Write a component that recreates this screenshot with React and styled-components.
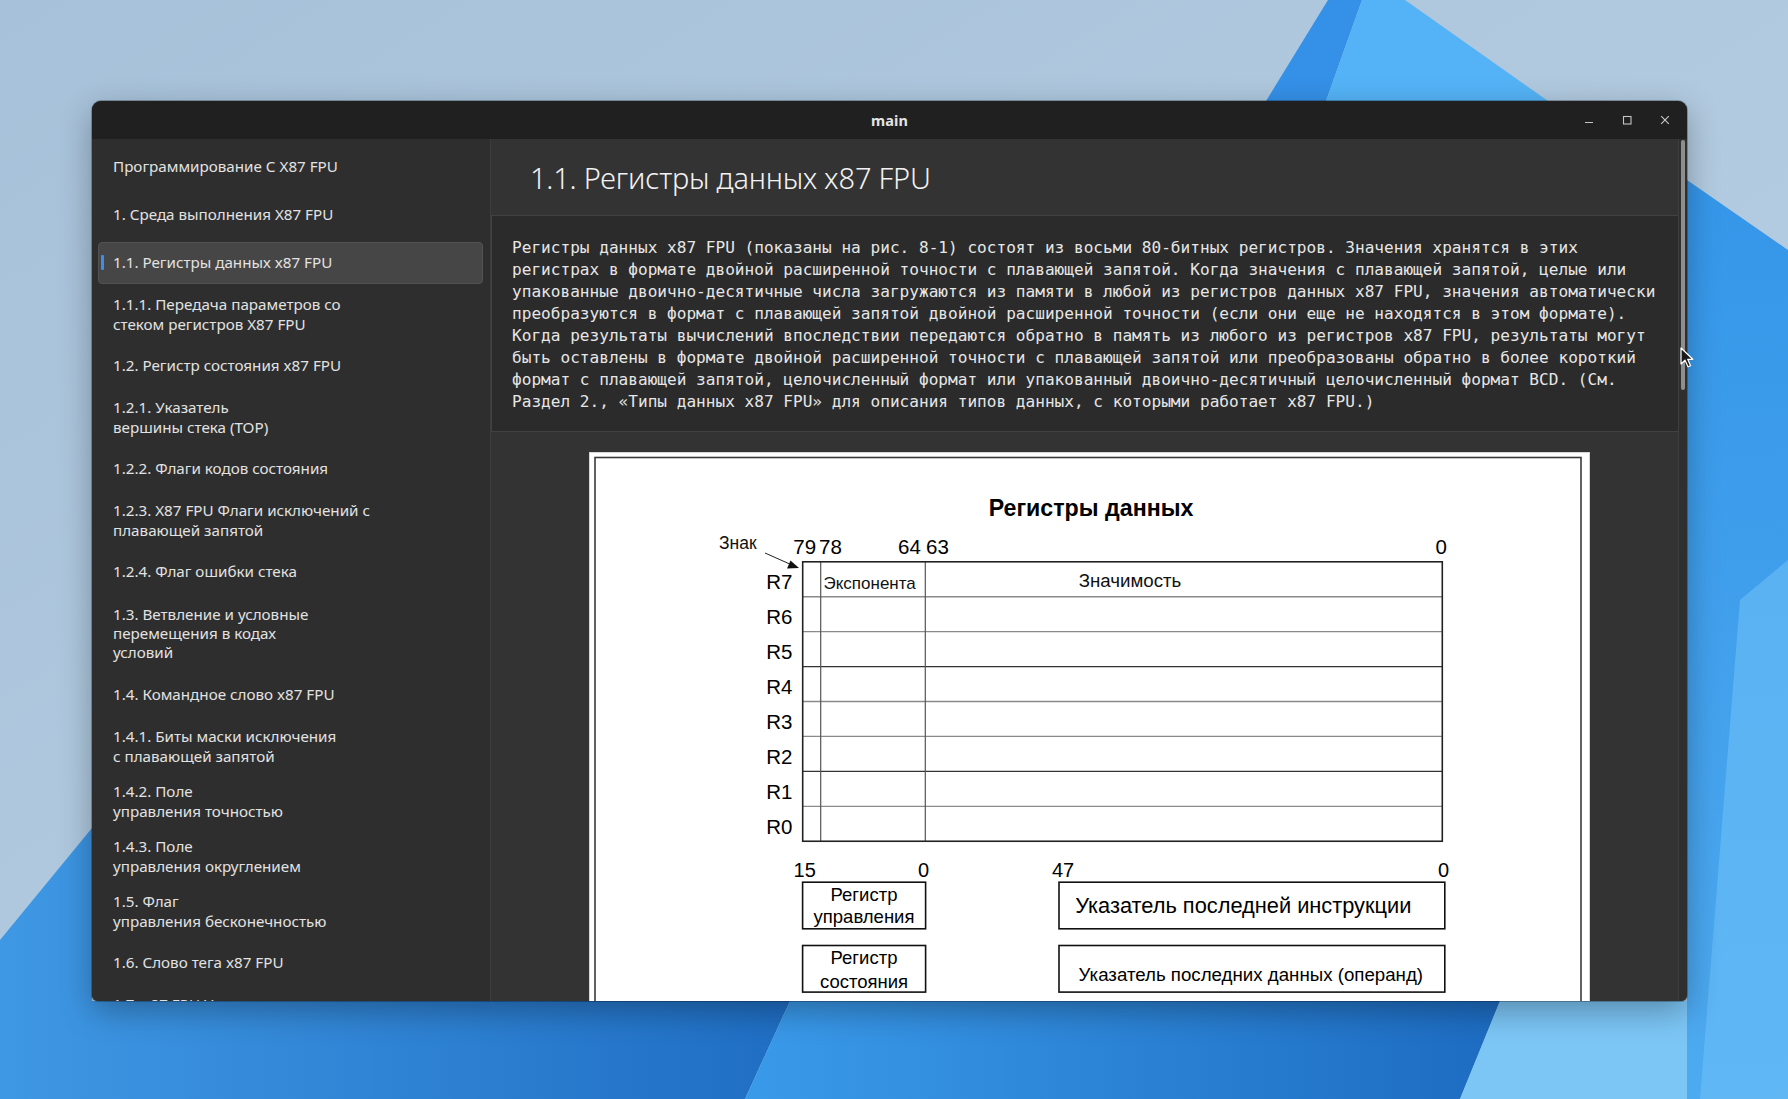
import React from "react";
import styled, { createGlobalStyle } from "styled-components";

const GlobalStyle = createGlobalStyle`
  html, body {
    margin: 0;
    padding: 0;
    width: 100%;
    height: 100%;
    overflow: hidden;
  }
  body {
    font-family: "Noto Sans", "Open Sans", sans-serif;
    background: #a3bfd8;
  }
`;

const Desktop = styled.div`
  position: relative;
  width: 1788px;
  height: 1099px;
  overflow: hidden;
`;

const Wallpaper = styled.svg`
  position: absolute;
  left: 0;
  top: 0;
`;

const Window = styled.div`
  position: absolute;
  left: 92px;
  top: 101px;
  width: 1595px;
  height: 900px;
  display: flex;
  flex-direction: column;
  border-radius: 9px 9px 6px 6px;
  overflow: hidden;
  background: #2e2e2e;
  box-shadow: 0 10px 32px rgba(0, 0, 0, 0.3), 0 0 0 1px rgba(0, 0, 0, 0.25);
`;

const TitleBar = styled.div`
  height: 38px;
  flex: none;
  display: grid;
  grid-template-columns: 1fr auto 1fr;
  align-items: center;
  background: #202020;
`;

const Title = styled.div`
  grid-column: 2;
  font-size: 14.5px;
  font-weight: 700;
  color: #e4e4e4;
  letter-spacing: 0.1px;
`;

const Controls = styled.div`
  grid-column: 3;
  justify-self: end;
  display: flex;
  padding-right: 3px;
`;

const CtlButton = styled.div`
  width: 38px;
  height: 38px;
  display: flex;
  align-items: center;
  justify-content: center;
`;

const Body = styled.div`
  flex: 1;
  min-height: 0;
  display: flex;
`;

const Sidebar = styled.nav`
  width: 398px;
  flex: none;
  display: flex;
  flex-direction: column;
  padding-top: 4px;
  background: #2e2e2e;
  border-right: 1px solid #3d3d3d;
  overflow: hidden;
`;

const itemHeights = { 1: 48, 2: 55, 3: 75 };

const NavItem = styled.div`
  position: relative;
  flex: none;
  box-sizing: border-box;
  height: ${(p) => itemHeights[p.$lines] - 6}px;
  margin: 3px 7px 3px 6px;
  padding-left: 14px;
  display: flex;
  flex-direction: column;
  justify-content: center;
  font-size: 15.2px;
  line-height: 19.2px;
  color: #e2e2e2;
  white-space: nowrap;
  border: 1px solid ${(p) => (p.$active ? "#525252" : "transparent")};
  border-radius: 4px;
  background: ${(p) => (p.$active ? "#464646" : "transparent")};

  &::before {
    content: "";
    display: ${(p) => (p.$active ? "block" : "none")};
    position: absolute;
    left: 2px;
    top: 50%;
    width: 3px;
    height: 15px;
    margin-top: -8px;
    border-radius: 1px;
    background: #3b8eea;
  }
`;

const Content = styled.main`
  flex: 1;
  min-width: 0;
  display: flex;
`;

const Page = styled.div`
  flex: 1;
  min-width: 0;
  overflow: hidden;
  background: #333333;
`;

const Heading = styled.h1`
  margin: 0;
  height: 76px;
  display: flex;
  align-items: center;
  padding-left: 39px;
  font-size: 29px;
  font-weight: 300;
  color: #f2f2f2;
  letter-spacing: -0.2px;
`;

const TextBlock = styled.div`
  background: #2b2b2b;
  border-top: 1px solid #414141;
  border-bottom: 1px solid #414141;
  border-left: 1px solid #414141;
  padding: 21px 0 18px 20px;
`;

const Mono = styled.p`
  margin: 0;
  width: 1150px;
  font-family: "DejaVu Sans Mono", "Liberation Mono", monospace;
  font-size: 16.1px;
  line-height: 22px;
  color: #e6e6e6;
`;

const Figure = styled.div`
  display: flex;
  justify-content: center;
  padding: 20px 0 0 10px;
`;

const Scrollbar = styled.div`
  width: 8px;
  flex: none;
  background: #2f2f2f;
  border-left: 1px solid #3e3e3e;
  padding-top: 1px;
`;

const Thumb = styled.div`
  width: 4px;
  height: 250px;
  margin-left: 2px;
  border-radius: 2px;
  background: #8e8e8e;
`;

const Cursor = styled.svg`
  position: absolute;
  left: 1680px;
  top: 347px;
`;

const navItems = [
  ["Программирование С X87 FPU"],
  ["1. Среда выполнения X87 FPU"],
  ["1.1. Регистры данных x87 FPU"],
  ["1.1.1. Передача параметров со", "стеком регистров X87 FPU"],
  ["1.2. Регистр состояния x87 FPU"],
  ["1.2.1. Указатель", "вершины стека (TOP)"],
  ["1.2.2. Флаги кодов состояния"],
  ["1.2.3. X87 FPU Флаги исключений с", "плавающей запятой"],
  ["1.2.4. Флаг ошибки стека"],
  ["1.3. Ветвление и условные", "перемещения в кодах", "условий"],
  ["1.4. Командное слово x87 FPU"],
  ["1.4.1. Биты маски исключения", "с плавающей запятой"],
  ["1.4.2. Поле", "управления точностью"],
  ["1.4.3. Поле", "управления округлением"],
  ["1.5. Флаг", "управления бесконечностью"],
  ["1.6. Слово тега x87 FPU"],
  ["1.7. x87 FPU Указатели", "инструкций и данных"],
];

const paragraph =
  "Регистры данных x87 FPU (показаны на рис. 8-1) состоят из восьми 80-битных регистров. Значения хранятся в этих регистрах в формате двойной расширенной точности с плавающей запятой. Когда значения с плавающей запятой, целые или упакованные двоично-десятичные числа загружаются из памяти в любой из регистров данных x87 FPU, значения автоматически преобразуются в формат с плавающей запятой двойной расширенной точности (если они еще не находятся в этом формате). Когда результаты вычислений впоследствии передаются обратно в память из любого из регистров x87 FPU, результаты могут быть оставлены в формате двойной расширенной точности с плавающей запятой или преобразованы обратно в более короткий формат с плавающей запятой, целочисленный формат или упакованный двоично-десятичный целочисленный формат BCD. (См. Раздел 2., «Типы данных x87 FPU» для описания типов данных, с которыми работает x87 FPU.)";

function WallpaperArt() {
  return (
    <Wallpaper width="1788" height="1099" viewBox="0 0 1788 1099">
      <defs>
        <linearGradient id="sky" x1="0" y1="0" x2="1" y2="1">
          <stop offset="0" stopColor="#a6c1d9" />
          <stop offset="0.6" stopColor="#b3cbe0" />
          <stop offset="1" stopColor="#a9c5de" />
        </linearGradient>
        <linearGradient id="rightBlue" x1="0" y1="0" x2="0" y2="1">
          <stop offset="0" stopColor="#3596e9" />
          <stop offset="1" stopColor="#4eaaf0" />
        </linearGradient>
        <linearGradient id="bottomLeft" x1="0" y1="0" x2="1" y2="0">
          <stop offset="0" stopColor="#3f98e4" />
          <stop offset="1" stopColor="#1f6ec4" />
        </linearGradient>
        <linearGradient id="bottomMid" x1="0" y1="0" x2="1" y2="0">
          <stop offset="0" stopColor="#3a9aea" />
          <stop offset="1" stopColor="#1d6cc2" />
        </linearGradient>
      </defs>
      <rect width="1788" height="1099" fill="url(#sky)" />
      <polygon points="1266,101 1328,0 1362,0 1326,101" fill="#3590e7" />
      <polygon points="1326,101 1362,0 1405,0 1548,101" fill="#54b3f6" />
      <polygon points="1687,180 1788,250 1788,1099 1687,1099" fill="url(#rightBlue)" />
      <polygon points="1740,600 1788,560 1788,1099 1700,1099" fill="#6cc0f6" opacity="0.6" />
      <polygon points="0,940 92,828 92,1001 790,1001 745,1099 0,1099" fill="url(#bottomLeft)" />
      <polygon points="790,1001 1500,1001 1460,1099 745,1099" fill="url(#bottomMid)" />
      <polygon points="1500,1001 1687,1001 1687,1099 1460,1099" fill="#7cc6f6" />
    </Wallpaper>
  );
}

function RegisterDiagram() {
  const rowH = 34.93;
  const top = 109.8;
  const regs = ["R7", "R6", "R5", "R4", "R3", "R2", "R1", "R0"];
  const font = '"Liberation Sans", Arial, sans-serif';
  return (
    <svg width="1001" height="620" viewBox="0 0 1001 620" fontFamily={font}>
      <rect x="0.5" y="0.5" width="1000" height="619" fill="#ffffff" stroke="#d6d6d6" />
      <rect x="6" y="5.5" width="986" height="640" fill="none" stroke="#3a3a3a" strokeWidth="1.6" />
      <text x="502" y="64" fontSize="23.2" fontWeight="700" textAnchor="middle" fill="#000">
        Регистры данных
      </text>
      <text x="130" y="96.5" fontSize="17.5" fill="#111">Знак</text>
      <line x1="176" y1="101" x2="203" y2="113" stroke="#222" strokeWidth="1" />
      <polygon points="210,116 198,116.5 201.5,108.5" fill="#111" />
      <text x="204.3" y="102" fontSize="20.5" fill="#000">79</text>
      <text x="230" y="102" fontSize="20.5" fill="#000">78</text>
      <text x="309" y="102" fontSize="20.5" fill="#000">64</text>
      <text x="337" y="102" fontSize="20.5" fill="#000">63</text>
      <text x="858" y="102" fontSize="20.5" textAnchor="end" fill="#000">0</text>

      {regs.map((r, i) => (
        <text key={r} x="203.5" y={top + rowH * i + 27.5} fontSize="20.5" textAnchor="end" fill="#000">
          {r}
        </text>
      ))}
      {regs.slice(1).map((r, i) => (
        <line
          key={r}
          x1="213.7"
          x2="853.3"
          y1={top + rowH * (i + 1)}
          y2={top + rowH * (i + 1)}
          stroke={i % 3 === 2 ? "#333" : "#8a8a8a"}
          strokeWidth="1.3"
        />
      ))}
      <line x1="231.7" y1={top} x2="231.7" y2={top + rowH * 8} stroke="#555" strokeWidth="1.2" />
      <line x1="336.3" y1={top} x2="336.3" y2={top + rowH * 8} stroke="#555" strokeWidth="1.2" />
      <rect x="213.7" y={top} width="639.6" height={rowH * 8} fill="none" stroke="#222" strokeWidth="1.6" />
      <text x="234.5" y="136.5" fontSize="17" fill="#111">Экспонента</text>
      <text x="489.7" y="134.5" fontSize="18.7" fill="#111">Значимость</text>

      <text x="204.6" y="425" fontSize="20" fill="#000">15</text>
      <text x="340" y="425" fontSize="20" textAnchor="end" fill="#000">0</text>
      <text x="463" y="425" fontSize="20" fill="#000">47</text>
      <text x="860" y="425" fontSize="20" textAnchor="end" fill="#000">0</text>

      <rect x="213.6" y="430.2" width="123" height="46.6" fill="none" stroke="#111" strokeWidth="1.6" />
      <text x="275" y="448.5" fontSize="18.5" textAnchor="middle" fill="#000">Регистр</text>
      <text x="275" y="471" fontSize="18.5" textAnchor="middle" fill="#000">управления</text>
      <rect x="213.6" y="493.5" width="123" height="46.6" fill="none" stroke="#111" strokeWidth="1.6" />
      <text x="275" y="512.3" fontSize="18.5" textAnchor="middle" fill="#000">Регистр</text>
      <text x="275" y="535.5" fontSize="18.5" textAnchor="middle" fill="#000">состояния</text>

      <rect x="470" y="430.2" width="385.8" height="46.6" fill="none" stroke="#111" strokeWidth="1.6" />
      <text x="654.3" y="461" fontSize="21.8" textAnchor="middle" fill="#000">
        Указатель последней инструкции
      </text>
      <rect x="470" y="493.5" width="385.8" height="46.6" fill="none" stroke="#111" strokeWidth="1.6" />
      <text x="661.8" y="528.5" fontSize="18.7" textAnchor="middle" fill="#000">
        Указатель последних данных (операнд)
      </text>
    </svg>
  );
}

export default function App() {
  return (
    <Desktop>
      <GlobalStyle />
      <WallpaperArt />
      <Window>
        <TitleBar>
          <Title>main</Title>
          <Controls>
            <CtlButton>
              <svg width="10" height="10" viewBox="0 0 10 10">
                <line x1="1" y1="7.5" x2="9" y2="7.5" stroke="#c4c4c4" strokeWidth="1.2" />
              </svg>
            </CtlButton>
            <CtlButton>
              <svg width="10" height="10" viewBox="0 0 10 10">
                <rect x="1.5" y="1.5" width="7.5" height="7.5" fill="none" stroke="#c4c4c4" strokeWidth="1.1" />
              </svg>
            </CtlButton>
            <CtlButton>
              <svg width="10" height="10" viewBox="0 0 10 10">
                <path d="M1.2 1.2 L8.8 8.8 M8.8 1.2 L1.2 8.8" stroke="#c4c4c4" strokeWidth="1.2" />
              </svg>
            </CtlButton>
          </Controls>
        </TitleBar>
        <Body>
          <Sidebar>
            {navItems.map((lines, i) => (
              <NavItem key={i} $lines={lines.length} $active={i === 2}>
                {lines.map((l) => (
                  <span key={l}>{l}</span>
                ))}
              </NavItem>
            ))}
          </Sidebar>
          <Content>
            <Page>
              <Heading>1.1. Регистры данных x87 FPU</Heading>
              <TextBlock>
                <Mono>{paragraph}</Mono>
              </TextBlock>
              <Figure>
                <RegisterDiagram />
              </Figure>
            </Page>
            <Scrollbar>
              <Thumb />
            </Scrollbar>
          </Content>
        </Body>
      </Window>
      <Cursor width="14" height="22" viewBox="0 0 14 22">
        <path
          d="M1 1 L1 17 L5 13.2 L8 19.8 L10.6 18.7 L7.7 12.3 L12.8 12.3 Z"
          fill="#1a1a1a"
          stroke="#ffffff"
          strokeWidth="1.2"
          strokeLinejoin="round"
        />
      </Cursor>
    </Desktop>
  );
}
